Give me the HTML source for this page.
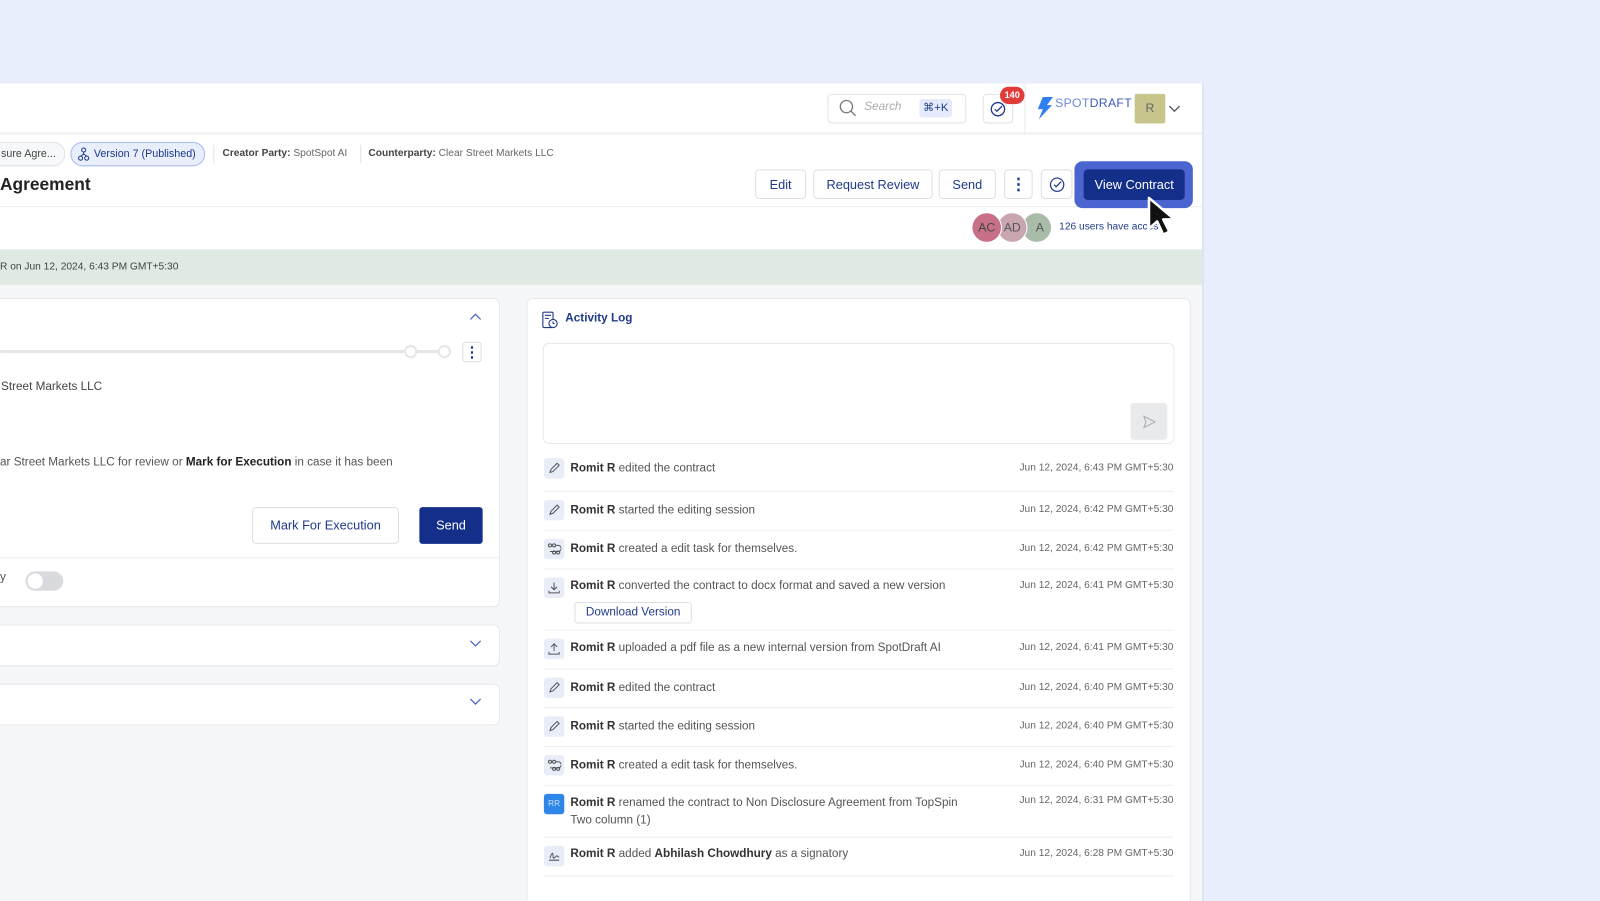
<!DOCTYPE html>
<html><head><meta charset="utf-8"><style>
*{box-sizing:border-box;margin:0;padding:0}
body{width:1600px;height:883px;overflow:hidden;background:#e8eefc;font-family:"Liberation Sans",sans-serif;position:relative;color:#333}
#w{position:absolute;left:0;top:0;width:1568px;height:866px;transform:scale(1.0204);transform-origin:0 0}
.a{position:absolute}
.panel{left:0;top:82px;width:1180px;height:801px;background:#f6f7f8;border-right:2px solid #dde4f5;overflow:hidden}
.btn{position:absolute;height:29px;border:1px solid #dcdfe4;border-radius:4px;background:#fff;color:#1f3a8a;font-size:12.5px;display:flex;align-items:center;justify-content:center}
.row{position:absolute;left:16px;right:16px;border-bottom:1px solid #eceef0;font-size:11.5px;color:#555}
.row b{color:#333;font-weight:bold}
.ic{position:absolute;left:0;width:20px;height:20px;background:#e9edf8;border-radius:3px}
.tx{position:absolute;left:26px;margin-top:3px}
.tm{position:absolute;right:0;font-size:10px;color:#666;margin-top:3px}
</style></head><body><div id="w">
<div class="a panel">
 <div class="a" style="left:0;top:0;width:1180px;height:49px;background:#fff;border-bottom:1px solid #e6e8eb"></div>
 <div class="a" style="left:811px;top:10px;width:136px;height:29px;border:1px solid #dfe2e6;border-radius:4px;background:#fff"></div>
 <svg class="a" style="left:822px;top:15px" width="18" height="18" viewBox="0 0 18 18"><circle cx="7.5" cy="7.5" r="6" fill="none" stroke="#777" stroke-width="1.3"/><path d="M12 12l4.5 4.5" stroke="#777" stroke-width="1.3"/></svg>
 <div class="a" style="left:847px;top:17px;font-size:11.5px;color:#aaa;font-style:italic">Search</div>
 <div class="a" style="left:901px;top:15px;width:32px;height:18px;background:#e4eafb;border-radius:3px;font-size:11px;color:#1f3a8a;text-align:center;line-height:18px">⌘+K</div>
 <div class="a" style="left:963px;top:10px;width:30px;height:29px;border:1px solid #dfe2e6;border-radius:4px;background:#fff"></div>
 <svg class="a" style="left:970px;top:17px" width="16" height="16" viewBox="0 0 16 16"><circle cx="8" cy="8" r="6.5" fill="none" stroke="#1f3a8a" stroke-width="1.3"/><path d="M5 8l2 2 5-5" fill="none" stroke="#1f3a8a" stroke-width="1.3"/></svg>
 <div class="a" style="left:980px;top:3px;width:24px;height:17px;background:#e23b3b;border-radius:9px;color:#fff;font-size:9px;font-weight:bold;text-align:center;line-height:17px">140</div>
 <div class="a" style="left:1004px;top:0;width:1px;height:49px;background:#e6e8eb"></div>
 <svg class="a" style="left:1015px;top:13px" width="18" height="22" viewBox="0 0 18 22"><path d="M7 0h10L11 8h5L3 22l4-10H2z" fill="#2f7ff0"/></svg>
 <div class="a" style="left:1034px;top:12px;font-size:12px;letter-spacing:0.3px;color:#6b8ad6">SPOT<span style="color:#3a5bb8">DRAFT</span></div>
 <div class="a" style="left:1112px;top:10px;width:30px;height:29px;background:#c7c58b;border-radius:2px;color:#666;font-size:12px;text-align:center;line-height:29px">R</div>
 <svg class="a" style="left:1144px;top:20px" width="14" height="10" viewBox="0 0 14 10"><path d="M2 2l5 5 5-5" fill="none" stroke="#556" stroke-width="1.3"/></svg>

 <div class="a" style="left:0;top:50px;width:1180px;height:113px;background:#fff;border-bottom:1px solid #eceef0"></div>
 <div class="a" style="left:0;top:120px;width:1180px;height:1px;background:#eceef0"></div>
 <div class="a" style="left:-20px;top:57px;width:84px;height:24px;border:1px solid #e1e3e6;border-radius:12px;background:#f7f8f9;font-size:10.5px;line-height:22px;padding-left:20px;color:#444">sure Agre...</div>
 <div class="a" style="left:69px;top:57px;width:132px;height:24px;border:1px solid #a9bcef;border-radius:12px;background:#e8eefc;font-size:10.5px;line-height:22px;padding-left:22px;color:#1f3a8a">Version 7 (Published)</div>
 <svg class="a" style="left:76px;top:62px" width="12" height="14" viewBox="0 0 12 14"><circle cx="6" cy="3" r="2" fill="none" stroke="#1f3a8a"/><circle cx="3" cy="11" r="2" fill="none" stroke="#1f3a8a"/><circle cx="9" cy="11" r="2" fill="none" stroke="#1f3a8a"/><path d="M6 5v2L3 9M6 7l3 2" fill="none" stroke="#1f3a8a"/></svg>
 <div class="a" style="left:209px;top:60px;width:1px;height:18px;background:#e1e3e6"></div>
 <div class="a" style="left:218px;top:63px;font-size:10px;color:#666"><b style="color:#444">Creator Party:</b> SpotSpot AI</div>
 <div class="a" style="left:353px;top:60px;width:1px;height:18px;background:#e1e3e6"></div>
 <div class="a" style="left:361px;top:63px;font-size:10px;color:#666"><b style="color:#444">Counterparty:</b> Clear Street Markets LLC</div>
 <div class="a" style="left:0;top:89px;font-size:17px;font-weight:bold;color:#222">Agreement</div>
 <div class="btn" style="left:740px;top:84px;width:50px">Edit</div>
 <div class="btn" style="left:797px;top:84px;width:117px">Request Review</div>
 <div class="btn" style="left:920px;top:84px;width:56px">Send</div>
 <div class="btn" style="left:984px;top:84px;width:28px;font-weight:bold;font-size:16px">⋮</div>
 <div class="btn" style="left:1020px;top:84px;width:31px"><svg width="16" height="16" viewBox="0 0 16 16"><circle cx="8" cy="8" r="6.5" fill="none" stroke="#1f3a8a" stroke-width="1.2"/><path d="M5 8l2 2 5-5" fill="none" stroke="#1f3a8a" stroke-width="1.2"/></svg></div>
 <div class="a" style="left:1053px;top:76px;width:116px;height:46px;border-radius:8px;background:#4a64d0"></div>
 <div class="a" style="left:1062px;top:84px;width:99px;height:30px;border-radius:4px;background:#142f8a;color:#fff;font-size:12.5px;text-align:center;line-height:30px">View Contract</div>
 <div class="a" style="left:1001px;top:126px;width:30px;height:30px;border-radius:50%;background:#a8bca9;border:1px solid #fff;color:#555;font-size:12px;line-height:28px;text-align:center;padding-left:6px">A</div>
 <div class="a" style="left:977px;top:126px;width:30px;height:30px;border-radius:50%;background:#c9a5b0;border:1px solid #fff;color:#555;font-size:12px;line-height:28px;text-align:center">AD</div>
 <div class="a" style="left:952px;top:126px;width:30px;height:30px;border-radius:50%;background:#c97089;border:1px solid #fff;color:#444;font-size:12px;line-height:28px;text-align:center">AC</div>
 <div class="a" style="left:1038px;top:135px;font-size:10px;color:#1f3a8a">126 users have access</div>
 <svg class="a" style="left:1120px;top:108px" width="42" height="48" viewBox="0 0 42 48"><path d="M6 4l0 30 8-7 6 13 6-3-6-12 11 0z" fill="#111" stroke="#fff" stroke-width="2.5" stroke-linejoin="round"/></svg>

 <div class="a" style="left:0;top:163px;width:1180px;height:34px;background:#dfeae3;font-size:10px;color:#444;line-height:34px">R on Jun 12, 2024, 6:43 PM GMT+5:30</div>

 <div class="a" style="left:-10px;top:210px;width:500px;height:303px;background:#fff;border:1px solid #e6e8eb;border-radius:6px"></div>
 <svg class="a" style="left:459px;top:223px" width="14" height="10" viewBox="0 0 14 10"><path d="M2 8l5-5 5 5" fill="none" stroke="#4a64c0" stroke-width="1.2"/></svg>
 <div class="a" style="left:0;top:261px;width:436px;height:3px;background:#e4e6e9;border-radius:2px"></div>
 <div class="a" style="left:396px;top:256px;width:13px;height:13px;border-radius:50%;border:2px solid #e4e6e9;background:#fff"></div>
 <div class="a" style="left:429px;top:256px;width:13px;height:13px;border-radius:50%;border:2px solid #e4e6e9;background:#fff"></div>
 <div class="a" style="left:453px;top:253px;width:19px;height:20px;border:1px solid #dcdfe4;border-radius:3px;color:#1f3a8a;font-weight:bold;font-size:14px;text-align:center;line-height:18px">⋮</div>
 <div class="a" style="left:1px;top:291px;font-size:11.5px;color:#444">Street Markets LLC</div>
 <div class="a" style="left:0;top:365px;font-size:11.5px;color:#555">ar Street Markets LLC for review or <b style="color:#222">Mark for Execution</b> in case it has been</div>
 <div class="btn" style="left:247px;top:415px;width:144px;height:36px">Mark For Execution</div>
 <div class="a" style="left:411px;top:415px;width:62px;height:36px;background:#142f8a;border-radius:3px;color:#fff;font-size:12.5px;text-align:center;line-height:36px">Send</div>
 <div class="a" style="left:0;top:464px;width:490px;height:1px;background:#eceef0"></div>
 <div class="a" style="left:0;top:478px;font-size:11.5px;color:#555">y</div>
 <div class="a" style="left:25px;top:478px;width:37px;height:19px;border-radius:10px;background:#d8dadd"></div>
 <div class="a" style="left:27px;top:480px;width:15px;height:15px;border-radius:50%;background:#fff"></div>
 <div class="a" style="left:-10px;top:530px;width:500px;height:41px;background:#fff;border:1px solid #e6e8eb;border-radius:6px"></div>
 <svg class="a" style="left:459px;top:544px" width="14" height="10" viewBox="0 0 14 10"><path d="M2 2l5 5 5-5" fill="none" stroke="#4a64c0" stroke-width="1.2"/></svg>
 <div class="a" style="left:-10px;top:588px;width:500px;height:41px;background:#fff;border:1px solid #e6e8eb;border-radius:6px"></div>
 <svg class="a" style="left:459px;top:601px" width="14" height="10" viewBox="0 0 14 10"><path d="M2 2l5 5 5-5" fill="none" stroke="#4a64c0" stroke-width="1.2"/></svg>

 <div class="a" style="left:516px;top:210px;width:651px;height:600px;background:#fff;border:1px solid #e6e8eb;border-radius:6px">
  <svg class="a" style="left:14px;top:12px" width="16" height="18" viewBox="0 0 16 18"><rect x="1" y="1" width="10" height="15" rx="1" fill="none" stroke="#1f3a8a" stroke-width="1.1"/><path d="M3 4h6M3 7h4" stroke="#1f3a8a"/><circle cx="11" cy="12" r="4" fill="#fff" stroke="#1f3a8a" stroke-width="1.1"/><path d="M11 10v2h1.5" stroke="#1f3a8a" fill="none"/></svg>
  <div class="a" style="left:37px;top:13px;font-size:11.5px;font-weight:bold;color:#1f3a8a">Activity Log</div>
  <div class="a" style="left:15px;top:43px;width:619px;height:99px;border:1px solid #e6e8eb;border-radius:6px"></div>
  <div class="a" style="left:591px;top:102px;width:36px;height:36px;background:#e9eaec;border-radius:3px"></div>
  <svg class="a" style="left:603px;top:114px" width="13" height="13" viewBox="0 0 13 13"><path d="M1 1l11 5.5L1 12l2-5.5z" fill="none" stroke="#aaa"/></svg>

  <div class="row" style="top:156px;height:33px"><div class="ic" style="top:0"></div><svg class="a" style="left:4px;top:4px" width="12" height="12" viewBox="0 0 12 12"><path d="M2 10l1-3 6-6 2 2-6 6z" fill="none" stroke="#555"/></svg><div class="tx" style="top:1px"><b>Romit R</b> edited the contract</div><div class="tm" style="top:1px">Jun 12, 2024, 6:43 PM GMT+5:30</div></div>
  <div class="row" style="top:189px;height:38px"><div class="ic" style="top:8px"></div><svg class="a" style="left:4px;top:12px" width="12" height="12" viewBox="0 0 12 12"><path d="M2 10l1-3 6-6 2 2-6 6z" fill="none" stroke="#555"/></svg><div class="tx" style="top:9px"><b>Romit R</b> started the editing session</div><div class="tm" style="top:9px">Jun 12, 2024, 6:42 PM GMT+5:30</div></div>
  <div class="row" style="top:227px;height:38px"><div class="ic" style="top:8px"></div><svg class="a" style="left:3px;top:12px" width="14" height="12" viewBox="0 0 14 12"><circle cx="3" cy="2.5" r="1.5" fill="none" stroke="#555"/><circle cx="7" cy="2.5" r="1.5" fill="none" stroke="#555"/><path d="M9 2.5h2a3 3 0 010 6H3" fill="none" stroke="#555"/><circle cx="7" cy="9.5" r="1.5" fill="none" stroke="#555"/><circle cx="11" cy="9.5" r="1.5" fill="none" stroke="#555"/></svg><div class="tx" style="top:9px"><b>Romit R</b> created a edit task for themselves.</div><div class="tm" style="top:9px">Jun 12, 2024, 6:42 PM GMT+5:30</div></div>
  <div class="row" style="top:265px;height:60px"><div class="ic" style="top:8px"></div><svg class="a" style="left:4px;top:12px" width="12" height="12" viewBox="0 0 12 12"><path d="M6 1v7M3 5l3 3 3-3M1 9v2h10V9" fill="none" stroke="#555"/></svg><div class="tx" style="top:7px"><b>Romit R</b> converted the contract to docx format and saved a new version</div><div class="tm" style="top:7px">Jun 12, 2024, 6:41 PM GMT+5:30</div><div class="a" style="left:30px;top:32px;width:115px;height:21px;border:1px solid #dcdfe4;border-radius:3px;color:#1f3a8a;font-size:11.5px;text-align:center;line-height:19px">Download Version</div></div>
  <div class="row" style="top:325px;height:38px"><div class="ic" style="top:8px"></div><svg class="a" style="left:4px;top:12px" width="12" height="12" viewBox="0 0 12 12"><path d="M6 8V1M3 4l3-3 3 3M1 9v2h10V9" fill="none" stroke="#555"/></svg><div class="tx" style="top:8px"><b>Romit R</b> uploaded a pdf file as a new internal version from SpotDraft AI</div><div class="tm" style="top:8px">Jun 12, 2024, 6:41 PM GMT+5:30</div></div>
  <div class="row" style="top:363px;height:38px"><div class="ic" style="top:8px"></div><svg class="a" style="left:4px;top:12px" width="12" height="12" viewBox="0 0 12 12"><path d="M2 10l1-3 6-6 2 2-6 6z" fill="none" stroke="#555"/></svg><div class="tx" style="top:9px"><b>Romit R</b> edited the contract</div><div class="tm" style="top:9px">Jun 12, 2024, 6:40 PM GMT+5:30</div></div>
  <div class="row" style="top:401px;height:38px"><div class="ic" style="top:8px"></div><svg class="a" style="left:4px;top:12px" width="12" height="12" viewBox="0 0 12 12"><path d="M2 10l1-3 6-6 2 2-6 6z" fill="none" stroke="#555"/></svg><div class="tx" style="top:9px"><b>Romit R</b> started the editing session</div><div class="tm" style="top:9px">Jun 12, 2024, 6:40 PM GMT+5:30</div></div>
  <div class="row" style="top:439px;height:38px"><div class="ic" style="top:8px"></div><svg class="a" style="left:3px;top:12px" width="14" height="12" viewBox="0 0 14 12"><circle cx="3" cy="2.5" r="1.5" fill="none" stroke="#555"/><circle cx="7" cy="2.5" r="1.5" fill="none" stroke="#555"/><path d="M9 2.5h2a3 3 0 010 6H3" fill="none" stroke="#555"/><circle cx="7" cy="9.5" r="1.5" fill="none" stroke="#555"/><circle cx="11" cy="9.5" r="1.5" fill="none" stroke="#555"/></svg><div class="tx" style="top:9px"><b>Romit R</b> created a edit task for themselves.</div><div class="tm" style="top:9px">Jun 12, 2024, 6:40 PM GMT+5:30</div></div>
  <div class="row" style="top:477px;height:51px"><div class="ic" style="top:8px;background:#2e86e8;color:#cfe0ff;font-size:8px;text-align:center;line-height:20px">RR</div><div class="tx" style="top:6px;width:400px;line-height:17px"><b>Romit R</b> renamed the contract to Non Disclosure Agreement from TopSpin Two column (1)</div><div class="tm" style="top:6px">Jun 12, 2024, 6:31 PM GMT+5:30</div></div>
  <div class="row" style="top:528px;height:38px"><div class="ic" style="top:8px"></div><svg class="a" style="left:4px;top:12px" width="12" height="12" viewBox="0 0 12 12"><path d="M1 10h10M2 8c2-6 3-6 3-2s2 1 3 0 2 1 3 1" fill="none" stroke="#555"/></svg><div class="tx" style="top:7px"><b>Romit R</b> added <b>Abhilash Chowdhury</b> as a signatory</div><div class="tm" style="top:7px">Jun 12, 2024, 6:28 PM GMT+5:30</div></div>
 </div>
</div>
</div></body></html>
